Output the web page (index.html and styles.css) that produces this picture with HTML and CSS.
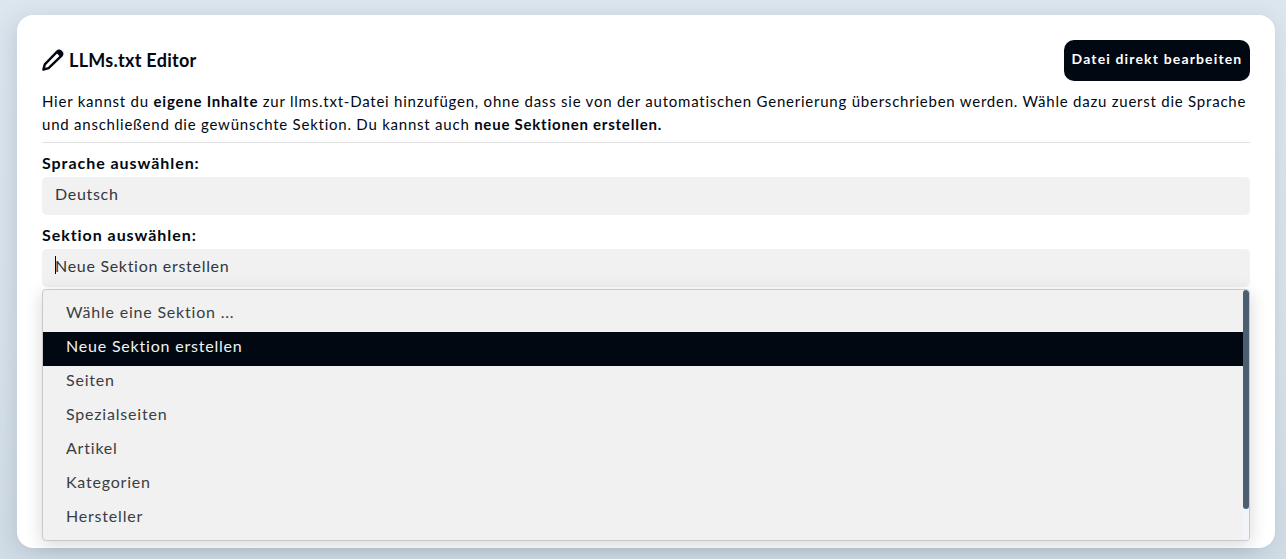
FILE: index.html
```html
<!DOCTYPE html>
<html lang="de">
<head>
<meta charset="utf-8">
<title>LLMs.txt Editor</title>
<link rel="stylesheet" href="styles.css">
</head>
<body>
<main class="card">
  <header class="head">
    <h1 class="title">
      <svg class="pencil" viewBox="1 1 22 22" width="22" height="22" aria-hidden="true">
        <path d="M2.4 21.6l1.4-5.2L16.4 3.4a2.1 2.1 0 0 1 3 0l1.2 1.2a2.1 2.1 0 0 1 0 3L7.6 20.2z" fill="none" stroke="#020812" stroke-width="2.4" stroke-linejoin="round"/>
        <path d="M15 4.6l4.4 4.4 1.9-1.9a2.6 2.6 0 0 0 0-3.7l-.7-.7a2.6 2.6 0 0 0-3.7 0z" fill="#020812"/>
      </svg>
      LLMs.txt Editor
    </h1>
    <button class="btn" type="button">Datei direkt bearbeiten</button>
  </header>
  <p class="intro">Hier kannst du <strong>eigene Inhalte</strong> zur llms.txt-Datei hinzufügen, ohne dass sie von der automatischen Generierung überschrieben werden. Wähle dazu zuerst die Sprache und anschließend die gewünschte Sektion. Du kannst auch <strong>neue Sektionen erstellen.</strong></p>
  <hr class="rule">
  <div class="label">Sprache auswählen:</div>
  <div class="select">Deutsch</div>
  <div class="label label-second">Sektion auswählen:</div>
  <div class="select"><span class="caret"></span>Neue Sektion erstellen</div>
  <div class="dropdown">
    <ul class="options">
      <li>Wähle eine Sektion ...</li>
      <li class="active">Neue Sektion erstellen</li>
      <li>Seiten</li>
      <li>Spezialseiten</li>
      <li>Artikel</li>
      <li>Kategorien</li>
      <li>Hersteller</li>
    </ul>
    <div class="track"><div class="thumb"></div></div>
  </div>
</main>
</body>
</html>
```
FILE: styles.css
```css
* { box-sizing: border-box; }
html, body { height: 100%; }
body {
  margin: 0;
  padding: 15px 11px 11px 17px;
  overflow: hidden;
  background: linear-gradient(180deg, #dde6ee 0%, #d8e2ea 60%, #d2dde6 100%);
  font-family: "Lato", "Noto Sans", sans-serif;
  color: #020812;
}
.card {
  height: 533px;
  padding: 25px 25px 0;
  background: #fff;
  border-radius: 16px;
  box-shadow: -3px 5px 22px rgba(70, 95, 120, .2);
}
.head {
  display: flex;
  justify-content: space-between;
  align-items: center;
  height: 41px;
}
.title {
  display: flex;
  align-items: center;
  gap: 5px;
  margin: 0 0 2px;
  font-size: 18px;
  font-weight: 700;
  letter-spacing: .28px;
}
.pencil { flex: none; }
.btn {
  height: 41px;
  width: 186px;
  padding: 0 0 4px;
  border: 0;
  border-radius: 10px;
  background: #020812;
  color: #fff;
  font: 700 14px "Lato", sans-serif;
  letter-spacing: 1.15px;
}
.intro {
  margin: 9px 0 0;
  font-size: 15px;
  line-height: 23px;
  letter-spacing: .77px;
}
.intro strong { font-weight: 700; }
.rule {
  margin: 6px 0 0;
  border: 0;
  border-top: 1px solid #e2e2e2;
}
.label {
  margin-top: 11px;
  height: 23px;
  line-height: 18px;
  font-size: 16px;
  font-weight: 700;
  letter-spacing: .95px;
}
.label-second { margin-top: 11px; }
.select {
  display: flex;
  align-items: center;
  height: 38px;
  padding: 0 0 6px 13px;
  border-radius: 5px;
  background: #f1f1f1;
  color: #33373d;
  font-size: 16px;
  letter-spacing: .7px;
}
.caret {
  width: 1px;
  height: 18px;
  margin-right: -1px;
  background: #020812;
}
.dropdown {
  display: flex;
  height: 252px;
  margin-top: 2px;
  overflow: hidden;
  border: 1px solid #c9c9c9;
  border-radius: 4px;
  background: #f1f1f1;
  box-shadow: 0 4px 18px rgba(0, 0, 0, .16);
}
.options {
  flex: 1;
  margin: 0;
  padding: 8px 0 0;
  list-style: none;
  color: #3a3e44;
  font-size: 16px;
  letter-spacing: .8px;
}
.options li {
  height: 34px;
  padding-left: 23px;
  line-height: 28px;
}
.options .active {
  background: #020812;
  color: #f1f1f1;
}
.track {
  flex: none;
  width: 6px;
  background: #f1f5fa;
}
.thumb {
  height: 219px;
  border-radius: 3px;
  background: #4a6072;
}
```
